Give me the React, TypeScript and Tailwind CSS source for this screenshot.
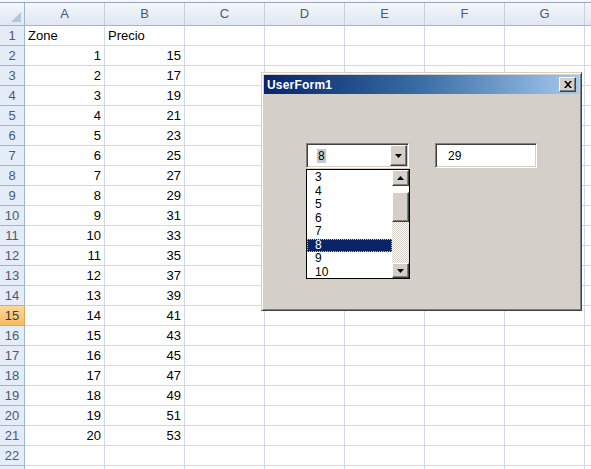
const cols = ["A", "B", "C", "D", "E", "F", "G", ""];

const rows: { n: number; label: string; a?: string; b?: string; left?: boolean }[] = [
  { n: 1, label: "1", a: "Zone", b: "Precio", left: true },
  ...Array.from({ length: 20 }, (_, i) => ({ n: i + 2, label: String(i + 2), a: String(i + 1), b: String(15 + i * 2) })),
  { n: 22, label: "22" },
  { n: 23, label: "" },
];

const listItems = ["3", "4", "5", "6", "7", "8", "9", "10"];

function Arrow({ down }: { down?: boolean }) {
  return (
    <svg width="7" height="4" viewBox="0 0 7 4">
      {down ? <path d="M0 0h7L3.5 4z" fill="#000" /> : <path d="M0 4h7L3.5 0z" fill="#000" />}
    </svg>
  );
}

function Btn({ children, className = "" }: { children?: React.ReactNode; className?: string }) {
  return (
    <div
      className={
        "flex items-center justify-center bg-[#d4d0c8] border border-t-white border-l-white border-r-[#404040] border-b-[#404040] shadow-[inset_-1px_-1px_0_#808080] " +
        className
      }
    >
      {children}
    </div>
  );
}

export default function App() {
  return (
    <div className="relative w-[591px] h-[469px] overflow-hidden bg-white font-['Liberation_Sans',sans-serif] text-[13px] text-black">
      <div className="h-[3px] bg-[#f3f6fa] border-b border-[#9aa6b8]" />
      <div className="flex h-[23px] bg-gradient-to-b from-[#f4f7fb] to-[#dfe7f2] border-b border-[#9eb6ce] text-[#4c5a6e]">
        <div className="w-[25px] shrink-0 border-r border-[#9eb6ce] flex items-end justify-end p-[3px]">
          <svg width="10" height="10" viewBox="0 0 10 10">
            <path d="M10 0v10H0z" fill="#b6c6da" />
          </svg>
        </div>
        {cols.map((c, i) => (
          <div key={i} className="w-[80px] shrink-0 border-r border-[#c5d1e0] flex items-center justify-center">
            {c}
          </div>
        ))}
      </div>
      {rows.map((r) => (
        <div key={r.n} className="flex h-[20px]">
          <div
            className={
              "w-[25px] shrink-0 border-r border-b flex items-center justify-center " +
              (r.n === 15
                ? "bg-gradient-to-b from-[#fbd89a] to-[#f5bc62] border-[#e0a94e] text-[#3a3a3a]"
                : "bg-[#e4ecf7] border-[#9eb6ce] text-[#4c5a6e]")
            }
          >
            {r.label}
          </div>
          <div
            className={
              "w-[80px] shrink-0 border-r border-b border-[#d0d7e5] flex items-center px-[3px] " +
              (r.left ? "justify-start" : "justify-end")
            }
          >
            {r.a}
          </div>
          <div
            className={
              "w-[80px] shrink-0 border-r border-b border-[#d0d7e5] flex items-center px-[3px] " +
              (r.left ? "justify-start" : "justify-end")
            }
          >
            {r.b}
          </div>
          {cols.slice(2).map((c, i) => (
            <div key={i} className="w-[80px] shrink-0 border-r border-b border-[#d0d7e5]" />
          ))}
        </div>
      ))}

      {/* UserForm window */}
      <div className="absolute left-[261px] top-[72px] w-[321px] h-[239px] bg-[#d4d0c8] border border-t-[#d4d0c8] border-l-[#d4d0c8] border-r-[#404040] border-b-[#404040] shadow-[inset_1px_1px_0_#fff,inset_-1px_-1px_0_#808080] p-[2px]">
        <div className="flex h-[19px] items-center justify-between bg-gradient-to-r from-[#0a246a] via-[#3a6ea5] to-[#a6caf0] pl-[3px] pr-[3px]">
          <span className="text-white font-bold text-[12px] tracking-[0.2px]">UserForm1</span>
          <Btn className="w-[17px] h-[15px]">
            <svg width="8" height="7" viewBox="0 0 8 7">
              <path d="M0 0h2l2 2.2L6 0h2L5 3.5 8 7H6L4 4.8 2 7H0l3-3.5z" fill="#000" />
            </svg>
          </Btn>
        </div>

        {/* ComboBox */}
        <div className="absolute left-[44px] top-[70px] w-[103px] h-[25px] bg-white border border-t-[#808080] border-l-[#808080] border-r-white border-b-white shadow-[inset_1px_1px_0_#404040,inset_-1px_-1px_0_#d4d0c8] flex">
          <div className="flex-1 flex items-center pl-[10px] text-[12px]">
            <span className="bg-[#c3cad6] px-[1px] leading-[14px]">8</span>
          </div>
          <Btn className="w-[17px] h-[21px] mt-[1px] mr-[1px]">
            <Arrow down />
          </Btn>
        </div>

        {/* TextBox */}
        <div className="absolute left-[173px] top-[70px] w-[102px] h-[25px] bg-white border border-t-[#808080] border-l-[#808080] border-r-white border-b-white shadow-[inset_1px_1px_0_#404040,inset_-1px_-1px_0_#d4d0c8] flex items-center pl-[12px] text-[12px]">
          29
        </div>

        {/* Dropdown list */}
        <div className="absolute left-[44px] top-[96px] w-[104px] h-[110px] bg-white border border-black flex">
          <div className="flex-1 flex flex-col pt-[1px] text-[12px] leading-[13.5px]">
            {listItems.map((it) => (
              <div
                key={it}
                className={
                  "pl-[8px] h-[13.5px] " +
                  (it === "8" ? "bg-[#0a246a] text-white outline outline-1 outline-dotted outline-offset-[-1px] outline-[#f0c060]" : "")
                }
              >
                {it}
              </div>
            ))}
          </div>
          <div className="w-[17px] flex flex-col bg-[repeating-conic-gradient(#fff_0_25%,#d4d0c8_0_50%)] bg-[length:2px_2px]">
            <Btn className="h-[16px] w-[17px]">
              <Arrow />
            </Btn>
            <div className="h-[6px] bg-white" />
            <Btn className="h-[30px] w-[17px]" />
            <div className="flex-1" />
            <Btn className="h-[15px] w-[17px]">
              <Arrow down />
            </Btn>
          </div>
        </div>
      </div>
    </div>
  );
}
